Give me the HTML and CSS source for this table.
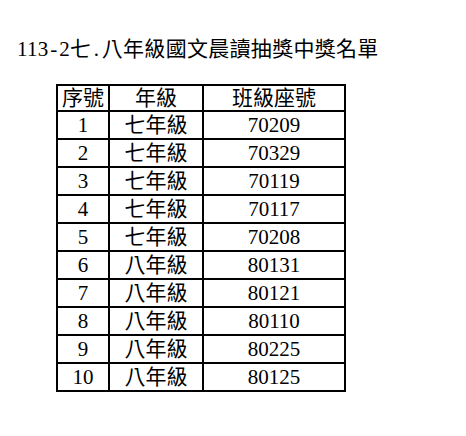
FILE: index.html
```html
<!DOCTYPE html>
<html lang="zh-Hant">
<head>
<meta charset="utf-8">
<title>113-2七.八年級國文晨讀抽獎中獎名單</title>
<link rel="stylesheet" href="styles.css">
</head>
<body>
<div class="page">
  <div class="title">113<span class="half">-</span>2七<span class="half">.</span>八年級國文晨讀抽獎中獎名單</div>
  <table class="list">
    <thead>
      <tr class="head"><th class="c1">序號</th><th class="c2">年級</th><th class="c3">班級座號</th></tr>
    </thead>
    <tbody>
      <tr><td>1</td><td>七年級</td><td>70209</td></tr>
      <tr><td>2</td><td>七年級</td><td>70329</td></tr>
      <tr><td>3</td><td>七年級</td><td>70119</td></tr>
      <tr><td>4</td><td>七年級</td><td>70117</td></tr>
      <tr><td>5</td><td>七年級</td><td>70208</td></tr>
      <tr><td>6</td><td>八年級</td><td>80131</td></tr>
      <tr><td>7</td><td>八年級</td><td>80121</td></tr>
      <tr><td>8</td><td>八年級</td><td>80110</td></tr>
      <tr><td>9</td><td>八年級</td><td>80225</td></tr>
      <tr><td>10</td><td>八年級</td><td>80125</td></tr>
    </tbody>
  </table>
</div>
</body>
</html>
```
FILE: styles.css
```css
html, body {
  margin: 0;
  padding: 0;
  background: #ffffff;
}
.page {
  padding: 37px 0 0 17px;
  font-family: "Liberation Serif", "Noto Sans CJK TC", serif;
  color: #000000;
}
.title {
  font-size: 21px;
  line-height: 24px;
  letter-spacing: 0.3px;
  white-space: nowrap;
}
.half {
  display: inline-block;
  width: 10.5px;
  text-align: center;
}
.list {
  margin: 23px 0 0 39px;
  border-collapse: collapse;
  font-size: 21px;
}
.list th, .list td {
  border: 2px solid #000000;
  padding: 0;
  text-align: center;
  font-weight: normal;
  line-height: 24px;
  vertical-align: middle;
}
.list th {
  height: 24px;
}
.list td {
  height: 26px;
}
.c1 { width: 50px; }
.c2 { width: 92px; }
.c3 { width: 140px; }
```
